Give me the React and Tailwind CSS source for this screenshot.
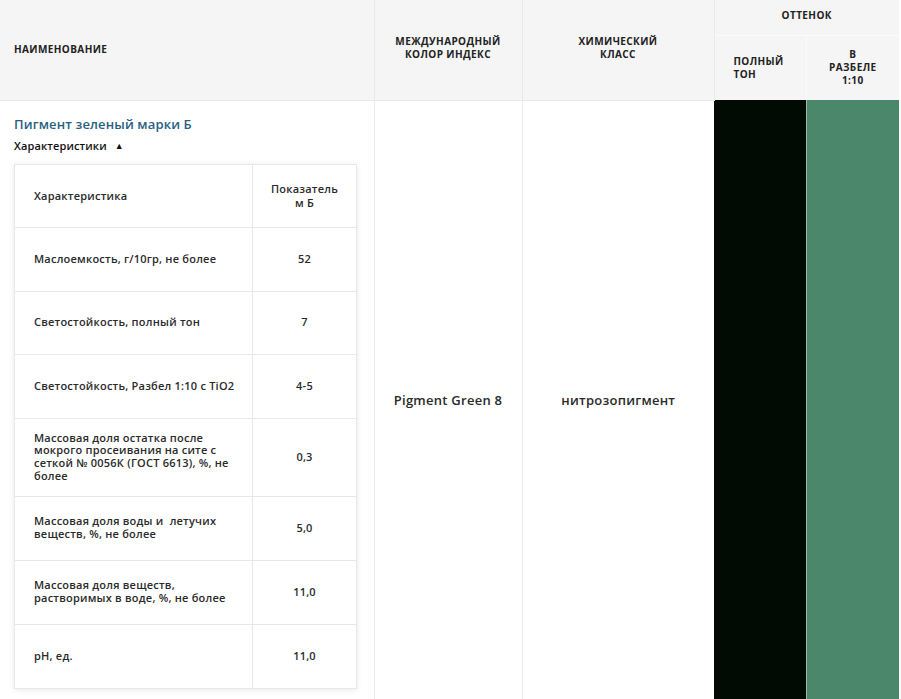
import React from 'react';

const specs = [
  { name: 'Маслоемкость, г/10гр, не более', value: '52', h: 'h-[64px]' },
  { name: 'Светостойкость, полный тон', value: '7', h: 'h-[63px]' },
  { name: 'Светостойкость, Разбел 1:10 с TiO2', value: '4-5', h: 'h-[64px]' },
  {
    name: 'Массовая доля остатка после мокрого просеивания на сите с сеткой № 0056К (ГОСТ 6613), %, не более',
    value: '0,3',
    h: 'h-[78px]',
  },
  { name: 'Массовая доля воды и\u00a0 летучих веществ, %, не более', value: '5,0', h: 'h-[64px]' },
  { name: 'Массовая доля веществ, растворимых в воде, %, не более', value: '11,0', h: 'h-[64px]' },
  { name: 'pH, ед.', value: '11,0', h: 'h-[64px]' },
];

function SpecTable() {
  return (
    <table className="w-[342px] table-fixed border-collapse bg-white shadow-[0_1px_6px_rgba(0,0,0,0.09)]">
      <colgroup>
        <col className="w-[238px]" />
        <col className="w-[104px]" />
      </colgroup>
      <tbody>
        <tr>
          <td className="h-[63px] border border-[#e8e8e8] px-[19px] align-middle text-[11px] font-semibold leading-[13px] tracking-[0.02em] text-[#2a2a2a]">
            Характеристика
          </td>
          <td className="h-[63px] border border-[#e8e8e8] px-2 text-center align-middle text-[11px] font-semibold leading-[14px] tracking-[0.02em] text-[#2a2a2a]">
            Показатель
            <br />м Б
          </td>
        </tr>
        {specs.map((row) => (
          <tr key={row.name}>
            <td
              className={`${row.h} border border-[#e8e8e8] pl-[19px] pr-[14px] py-[12px] align-middle text-[11px] font-semibold leading-[12.6px] tracking-[0.02em] text-[#2a2a2a]`}
            >
              {row.name}
            </td>
            <td className="border border-[#e8e8e8] px-2 text-center align-middle text-[11px] font-semibold tracking-[0.02em] text-[#2a2a2a]">
              {row.value}
            </td>
          </tr>
        ))}
      </tbody>
    </table>
  );
}

export default function App() {
  return (
    <div className="min-h-screen bg-white font-['Open_Sans',sans-serif] text-[#222]">
      <table className="w-[899px] table-fixed border-collapse">
        <colgroup>
          <col className="w-[374px]" />
          <col className="w-[148px]" />
          <col className="w-[192px]" />
          <col className="w-[92px]" />
          <col className="w-[93px]" />
        </colgroup>
        <thead>
          <tr className="bg-[#f5f5f5]">
            <th
              rowSpan={2}
              className="border-r border-b border-[#e9e9e9] px-[14px] text-left align-middle text-[10px] font-bold tracking-[0.04em] text-[#222]"
            >
              НАИМЕНОВАНИЕ
            </th>
            <th
              rowSpan={2}
              className="border-r border-b border-[#e9e9e9] px-2 pb-[4px] text-center align-middle text-[10px] font-bold leading-[13px] tracking-[0.04em] text-[#222]"
            >
              МЕЖДУНАРОДНЫЙ
              <br />
              КОЛОР ИНДЕКС
            </th>
            <th
              rowSpan={2}
              className="border-r border-b border-[#e9e9e9] px-2 pb-[4px] text-center align-middle text-[10px] font-bold leading-[13px] tracking-[0.04em] text-[#222]"
            >
              ХИМИЧЕСКИЙ
              <br />
              КЛАСС
            </th>
            <th
              colSpan={2}
              className="h-[35px] border-b border-[#fbfbfb] pb-[3px] text-center align-middle text-[10px] font-bold tracking-[0.04em] text-[#222]"
            >
              ОТТЕНОК
            </th>
          </tr>
          <tr className="bg-[#f5f5f5]">
            <th className="h-[65px] border-r border-[#fbfbfb] px-[19px] text-left align-middle text-[10px] font-bold leading-[13px] tracking-[0.04em] text-[#222]">
              ПОЛНЫЙ
              <br />
              ТОН
            </th>
            <th className="h-[65px] px-1 text-center align-middle text-[10px] font-bold leading-[13px] tracking-[0.04em] text-[#222]">
              В
              <br />
              РАЗБЕЛЕ
              <br />
              1:10
            </th>
          </tr>
        </thead>
        <tbody>
          <tr>
            <td className="border-r border-[#ececec] px-[14px] pt-[14px] pb-[12px] align-top">
              <div className="text-[13px] font-semibold leading-[18px] tracking-[0.01em] text-[#28607f]">
                Пигмент зеленый марки Б
              </div>
              <div className="mt-[5px] flex items-center gap-[8px] text-[11px] font-semibold leading-[16px] tracking-[0.01em] text-[#111]">
                Характеристики
                <span className="text-[9px] leading-none">▲</span>
              </div>
              <div className="mt-[10px]">
                <SpecTable />
              </div>
            </td>
            <td className="border-r border-[#ececec] text-center align-middle text-[13px] font-semibold tracking-[0.02em] text-[#2a2a2a]">
              Pigment Green 8
            </td>
            <td className="text-center align-middle text-[13px] font-semibold tracking-[0.02em] text-[#2a2a2a]">
              нитрозопигмент
            </td>
            <td className="border-r border-[#9fb5a8] bg-[#010a03]" />
            <td className="bg-[#4b876b]" />
          </tr>
        </tbody>
      </table>
    </div>
  );
}
